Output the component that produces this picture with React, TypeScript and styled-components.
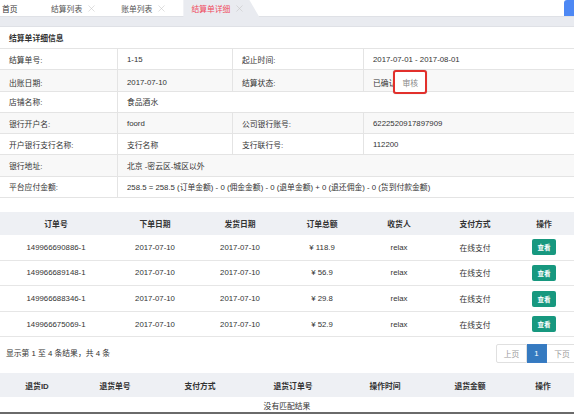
import React from "react";
import styled, { createGlobalStyle } from "styled-components";
import { X } from "lucide-react";

const GlobalStyle = createGlobalStyle`
  html, body {
    margin: 0;
    padding: 0;
    background: #fff;
    overflow: hidden;
  }
  body {
    font-family: "Liberation Sans", "Noto Sans CJK SC", sans-serif;
    font-size: 7.8px;
    color: #333;
  }
  * { box-sizing: border-box; }
`;

const tabs = [
  { title: "结算列表" },
  { title: "账单列表" },
  { title: "结算单详细", active: true },
];

const detailRows: { label: string; value: React.ReactNode; label2?: string; value2?: React.ReactNode }[] = [
  { label: "结算单号:", value: "1-15", label2: "起止时间:", value2: "2017-07-01 - 2017-08-01" },
  { label: "出账日期:", value: "2017-07-10", label2: "结算状态:", value2: "status" },
  { label: "店铺名称:", value: "食品酒水" },
  { label: "银行开户名:", value: "foord", label2: "公司银行账号:", value2: "6222520917897909" },
  { label: "开户银行支行名称:", value: "支行名称", label2: "支行联行号:", value2: "112200" },
  { label: "银行地址:", value: "北京 -密云区-城区以外" },
  {
    label: "平台应付金额:",
    value: "258.5 = 258.5 (订单金额) - 0 (佣金金额) - 0 (退单金额) + 0 (退还佣金) - 0 (货到付款金额)",
  },
];

const orders = [
  { id: "149966690886-1", total: "¥ 118.9" },
  { id: "149966689148-1", total: "¥ 56.9" },
  { id: "149966688346-1", total: "¥ 29.8" },
  { id: "149966675069-1", total: "¥ 52.9" },
];

const orderCols = "112px 86px 84px 80px 74px 78px 1fr";
const returnCols = "74px 82px 88px 98px 86px 84px 1fr";

const App = () => {
  return (
    <Page>
      <GlobalStyle />
      <TabBar>
        <HomeTab>首页</HomeTab>
        {tabs.map((t) => (
          <Tab key={t.title} $active={t.active}>
            {t.title}
            <X size={11} strokeWidth={1.2} color="#c4c4c4" />
          </Tab>
        ))}
        <BlueEdge />
      </TabBar>
      <Strip />

      <PanelTitle>结算单详细信息</PanelTitle>
      <Detail>
        {detailRows.map((r, i) => (
          <DetailRow key={r.label} $striped={i % 2 === 1}>
            <Cell>{r.label}</Cell>
            {r.label2 ? (
              <>
                <Cell $line>{r.value}</Cell>
                <Cell $line>{r.label2}</Cell>
                <Cell $line>
                  {r.value2 === "status" ? (
                    <>
                      已确认
                      <AuditButton>审核</AuditButton>
                    </>
                  ) : (
                    r.value2
                  )}
                </Cell>
              </>
            ) : (
              <Cell $line $span>
                {r.value}
              </Cell>
            )}
          </DetailRow>
        ))}
      </Detail>

      <OrderHead $cols={orderCols}>
        <span>订单号</span>
        <span>下单日期</span>
        <span>发货日期</span>
        <span>订单总额</span>
        <span>收货人</span>
        <span>支付方式</span>
        <span>操作</span>
      </OrderHead>
      {orders.map((o) => (
        <OrderRow key={o.id} $cols={orderCols}>
          <span>{o.id}</span>
          <span>2017-07-10</span>
          <span>2017-07-10</span>
          <span>{o.total}</span>
          <span>relax</span>
          <span>在线支付</span>
          <span>
            <ViewButton>查看</ViewButton>
          </span>
        </OrderRow>
      ))}

      <Footer>
        <span>显示第 1 至 4 条结果，共 4 条</span>
        <Pager>
          <PageItem>上页</PageItem>
          <PageItem $current>1</PageItem>
          <PageItem $last>下页</PageItem>
        </Pager>
      </Footer>

      <ReturnHead $cols={returnCols}>
        <span>退货ID</span>
        <span>退货单号</span>
        <span>支付方式</span>
        <span>退货订单号</span>
        <span>操作时间</span>
        <span>退货金额</span>
        <span>操作</span>
      </ReturnHead>
      <EmptyRow>没有匹配结果</EmptyRow>
    </Page>
  );
};

export default App;

const Page = styled.div`
  width: 574px;
  height: 415px;
  overflow: hidden;
  display: flex;
  flex-direction: column;
`;

const TabBar = styled.div`
  display: flex;
  align-items: stretch;
  height: 17px;
  background: #fff;
  border-bottom: 1px solid #dfe1e6;
`;

const HomeTab = styled.div`
  width: 43px;
  padding-left: 2px;
  display: flex;
  align-items: center;
  color: #333;
`;

const Tab = styled.div<{ $active?: boolean }>`
  display: flex;
  align-items: center;
  gap: 4px;
  padding: 0 ${(p) => (p.$active ? "14px" : "16px")} 0 8px;
  color: ${(p) => (p.$active ? "#ef4a5d" : "#555")};
  background: ${(p) => (p.$active ? "#e9ebf0" : "transparent")};
  clip-path: ${(p) =>
    p.$active ? "polygon(0 0, calc(100% - 10px) 0, 100% 100%, 0 100%)" : "none"};
  margin-bottom: ${(p) => (p.$active ? "-1px" : "0")};
`;

const BlueEdge = styled.div`
  margin-left: auto;
  width: 10px;
  background: #4d88f4;
  border-radius: 3px 0 0 0;
`;

const Strip = styled.div`
  height: 10px;
  background: #e9ebf0;
  border-bottom: 1px solid #dfe1e6;
`;

const PanelTitle = styled.div`
  height: 22px;
  padding-left: 9px;
  display: flex;
  align-items: center;
  font-weight: bold;
  border-bottom: 1px solid #e4e4e4;
`;

const Detail = styled.div`
  display: flex;
  flex-direction: column;
  margin-bottom: 14px;
`;

const DetailRow = styled.div<{ $striped: boolean }>`
  display: grid;
  grid-template-columns: 117px 115px 131px 1fr;
  height: 21.3px;
  background: ${(p) => (p.$striped ? "#f8f8f8" : "#fff")};
  border-bottom: 1px solid #e4e4e4;
`;

const Cell = styled.div<{ $line?: boolean; $span?: boolean }>`
  display: flex;
  align-items: center;
  padding-left: 9px;
  white-space: nowrap;
  border-left: ${(p) => (p.$line ? "1px solid #e4e4e4" : "none")};
  grid-column: ${(p) => (p.$span ? "span 3" : "auto")};
`;

const AuditButton = styled.span`
  position: relative;
  z-index: 2;
  display: inline-flex;
  align-items: center;
  height: 24px;
  margin-left: -3px;
  padding: 0 7px;
  background: #fff;
  color: #888;
  border: 2px solid #e2302c;
  border-radius: 3px;
  box-shadow: 0 0 1px rgba(0, 0, 0, 0.3);
`;

const OrderHead = styled.div<{ $cols: string }>`
  display: grid;
  grid-template-columns: ${(p) => p.$cols};
  height: 23px;
  align-items: center;
  text-align: center;
  background: #eef0f4;
  font-weight: bold;
`;

const OrderRow = styled.div<{ $cols: string }>`
  display: grid;
  grid-template-columns: ${(p) => p.$cols};
  height: 25.6px;
  align-items: center;
  text-align: center;
  border-bottom: 1px solid #e6e6e6;
`;

const ViewButton = styled.span`
  display: inline-flex;
  align-items: center;
  justify-content: center;
  width: 24px;
  height: 16px;
  background: #17987f;
  color: #fff;
  font-size: 6.5px;
  font-weight: bold;
  border-radius: 2px;
`;

const Footer = styled.div`
  display: flex;
  justify-content: space-between;
  align-items: flex-start;
  padding: 7px 0 0 6px;
  height: 36px;
  & > span {
    line-height: 18px;
    padding-top: 1px;
  }
`;

const Pager = styled.div`
  display: flex;
  margin-right: -4px;
`;

const PageItem = styled.span<{ $current?: boolean; $last?: boolean }>`
  display: flex;
  align-items: center;
  justify-content: center;
  height: 19px;
  width: ${(p) => (p.$current ? "20px" : "31px")};
  border: 1px solid ${(p) => (p.$current ? "#3a7cc4" : "#e0e0e0")};
  border-left-width: ${(p) => (p.$current || p.$last ? "0" : "1px")};
  border-radius: ${(p) => (p.$current ? "0" : p.$last ? "0 2px 2px 0" : "2px 0 0 2px")};
  background: ${(p) => (p.$current ? "#357ac0" : "#fff")};
  color: ${(p) => (p.$current ? "#fff" : "#999")};
`;

const ReturnHead = styled(OrderHead)`
  height: 24px;
`;

const EmptyRow = styled.div`
  height: 17px;
  line-height: 19px;
  text-align: center;
  border-bottom: 2px solid #6a6a6a;
`;
